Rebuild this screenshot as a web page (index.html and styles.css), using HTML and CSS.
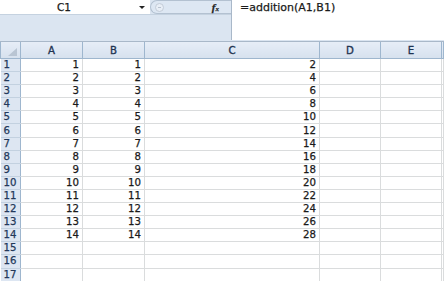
FILE: index.html
```html
<!DOCTYPE html>
<html lang="en">
<head>
    <meta charset="UTF-8">
    <title>addition</title>
    <link rel="stylesheet" href="styles.css">
</head>
<body>
    <div class="bar">
        <div class="bar-left">
            <div class="bar-top">
                <div class="namebox">
                    <span class="name">C1</span>
                    <span class="drop"></span>
                </div>
                <div class="fxzone">
                    <span class="knob"></span>
                    <span class="fx">f<sub>x</sub></span>
                </div>
            </div>
            <div class="bar-fill"></div>
        </div>
        <div class="formula">=addition(A1,B1)</div>
    </div>

    <table class="sheet">
        <colgroup>
            <col class="c-hd">
            <col class="c-a">
            <col class="c-b">
            <col class="c-c">
            <col class="c-d">
            <col class="c-e">
            <col>
        </colgroup>
        <thead>
            <tr>
                <th class="corner"><span class="tri"></span></th>
                <th>A</th>
                <th>B</th>
                <th>C</th>
                <th>D</th>
                <th>E</th>
                <th></th>
            </tr>
        </thead>
        <tbody id="rows"></tbody>
    </table>

    <script>
        // fill the rows: A, B and A+B in C
        var body = document.getElementById('rows');
        for (var i = 1; i <= 17; i++) {
            var tr = document.createElement('tr');
            var a = i <= 14 ? i : '';
            var c = i <= 14 ? i * 2 : '';
            tr.innerHTML = '<th>' + i + '</th><td>' + a + '</td><td>' + a + '</td><td>' + c + '</td><td></td><td></td><td></td>';
            body.appendChild(tr);
        }
    </script>
</body>
</html>
```
FILE: styles.css
```css
body {
    margin: 0;
    font-family: "DejaVu Sans", Verdana, sans-serif;
    color: #1a1a1a;
    background: #fff;
    width: 444px;
    height: 281px;
    overflow: hidden;
    -webkit-text-stroke: 0.25px;
}

/* formula bar */
.bar {
    display: flex;
    height: 42px;
    background: #dbe5f1;
    border-bottom: 1px solid #a9b8c9;
    box-sizing: border-box;
}

.bar-left {
    width: 231px;
    display: flex;
    flex-direction: column;
}

.bar-top {
    display: flex;
    height: 15px;
    border-bottom: 1px solid #c5d2e0;
    box-sizing: border-box;
}

.namebox {
    width: 150px;
    background: #fff;
    display: flex;
    align-items: center;
    position: relative;
    font-size: 10.5px;
}

.name {
    margin-left: 57px;
}

.drop {
    position: absolute;
    left: 139px;
    top: 6px;
    border-left: 3px solid transparent;
    border-right: 3px solid transparent;
    border-top: 3px solid #222;
}

.fxzone {
    flex: 1;
    display: flex;
    align-items: center;
    justify-content: space-between;
    background: #dde7f3;
    border: 1px solid #b3c1d1;
    border-right: none;
    border-radius: 7px 0 0 7px;
    padding: 0 12px 0 4px;
}

.knob {
    width: 9px;
    height: 9px;
    border-radius: 50%;
    border: 1px solid #c3ccd8;
    background: #e8eef6;
    position: relative;
    box-sizing: border-box;
    -webkit-text-stroke: 0;
}

.knob::after {
    content: "";
    position: absolute;
    left: 2px;
    top: 3px;
    width: 3px;
    height: 1px;
    background: #b8c2cf;
}

.fx {
    font-family: "Liberation Serif", serif;
    font-style: italic;
    font-weight: bold;
    font-size: 11px;
    color: #222;
}

.fx sub {
    font-size: 7px;
    vertical-align: 0;
}

.bar-fill {
    flex: 1;
}

.formula {
    flex: 1;
    background: #fff;
    border-left: 1px solid #a9b8c9;
    margin-bottom: 1px;
    font-size: 11px;
    padding: 1px 0 0 8px;
}

/* grid */
.sheet {
    border-collapse: collapse;
    table-layout: fixed;
    width: 444px;
    font-size: 10.2px;
}

.c-hd { width: 20px; }
.c-a { width: 62px; }
.c-b { width: 62px; }
.c-c { width: 175px; }
.c-d { width: 61px; }
.c-e { width: 61px; }

.sheet thead th {
    height: 16px;
    padding: 0;
    font-weight: normal;
    color: #1f3452;
    background: linear-gradient(#e6edf7, #d6e1ee);
    border: 1px solid #9eb6ce;
    border-top: none;
    -webkit-text-stroke: 0.35px;
}

.sheet thead th.corner {
    position: relative;
}

.tri {
    position: absolute;
    right: 3px;
    bottom: 2px;
    border-left: 9px solid transparent;
    border-bottom: 8px solid #b9c5d3;
}

.sheet tbody th {
    height: 12.1px;
    padding: 0 0 0 3px;
    text-align: left;
    font-weight: normal;
    color: #23395a;
    background: #dde6f2;
    border-right: 1px solid #9eb6ce;
    border-bottom: 1px solid #c3d1e0;
    line-height: 12px;
}

.sheet td {
    height: 12.1px;
    padding: 0 3px 0 0;
    text-align: right;
    border: 1px solid #dadcdd;
    border-top: none;
    line-height: 12px;
}
```
